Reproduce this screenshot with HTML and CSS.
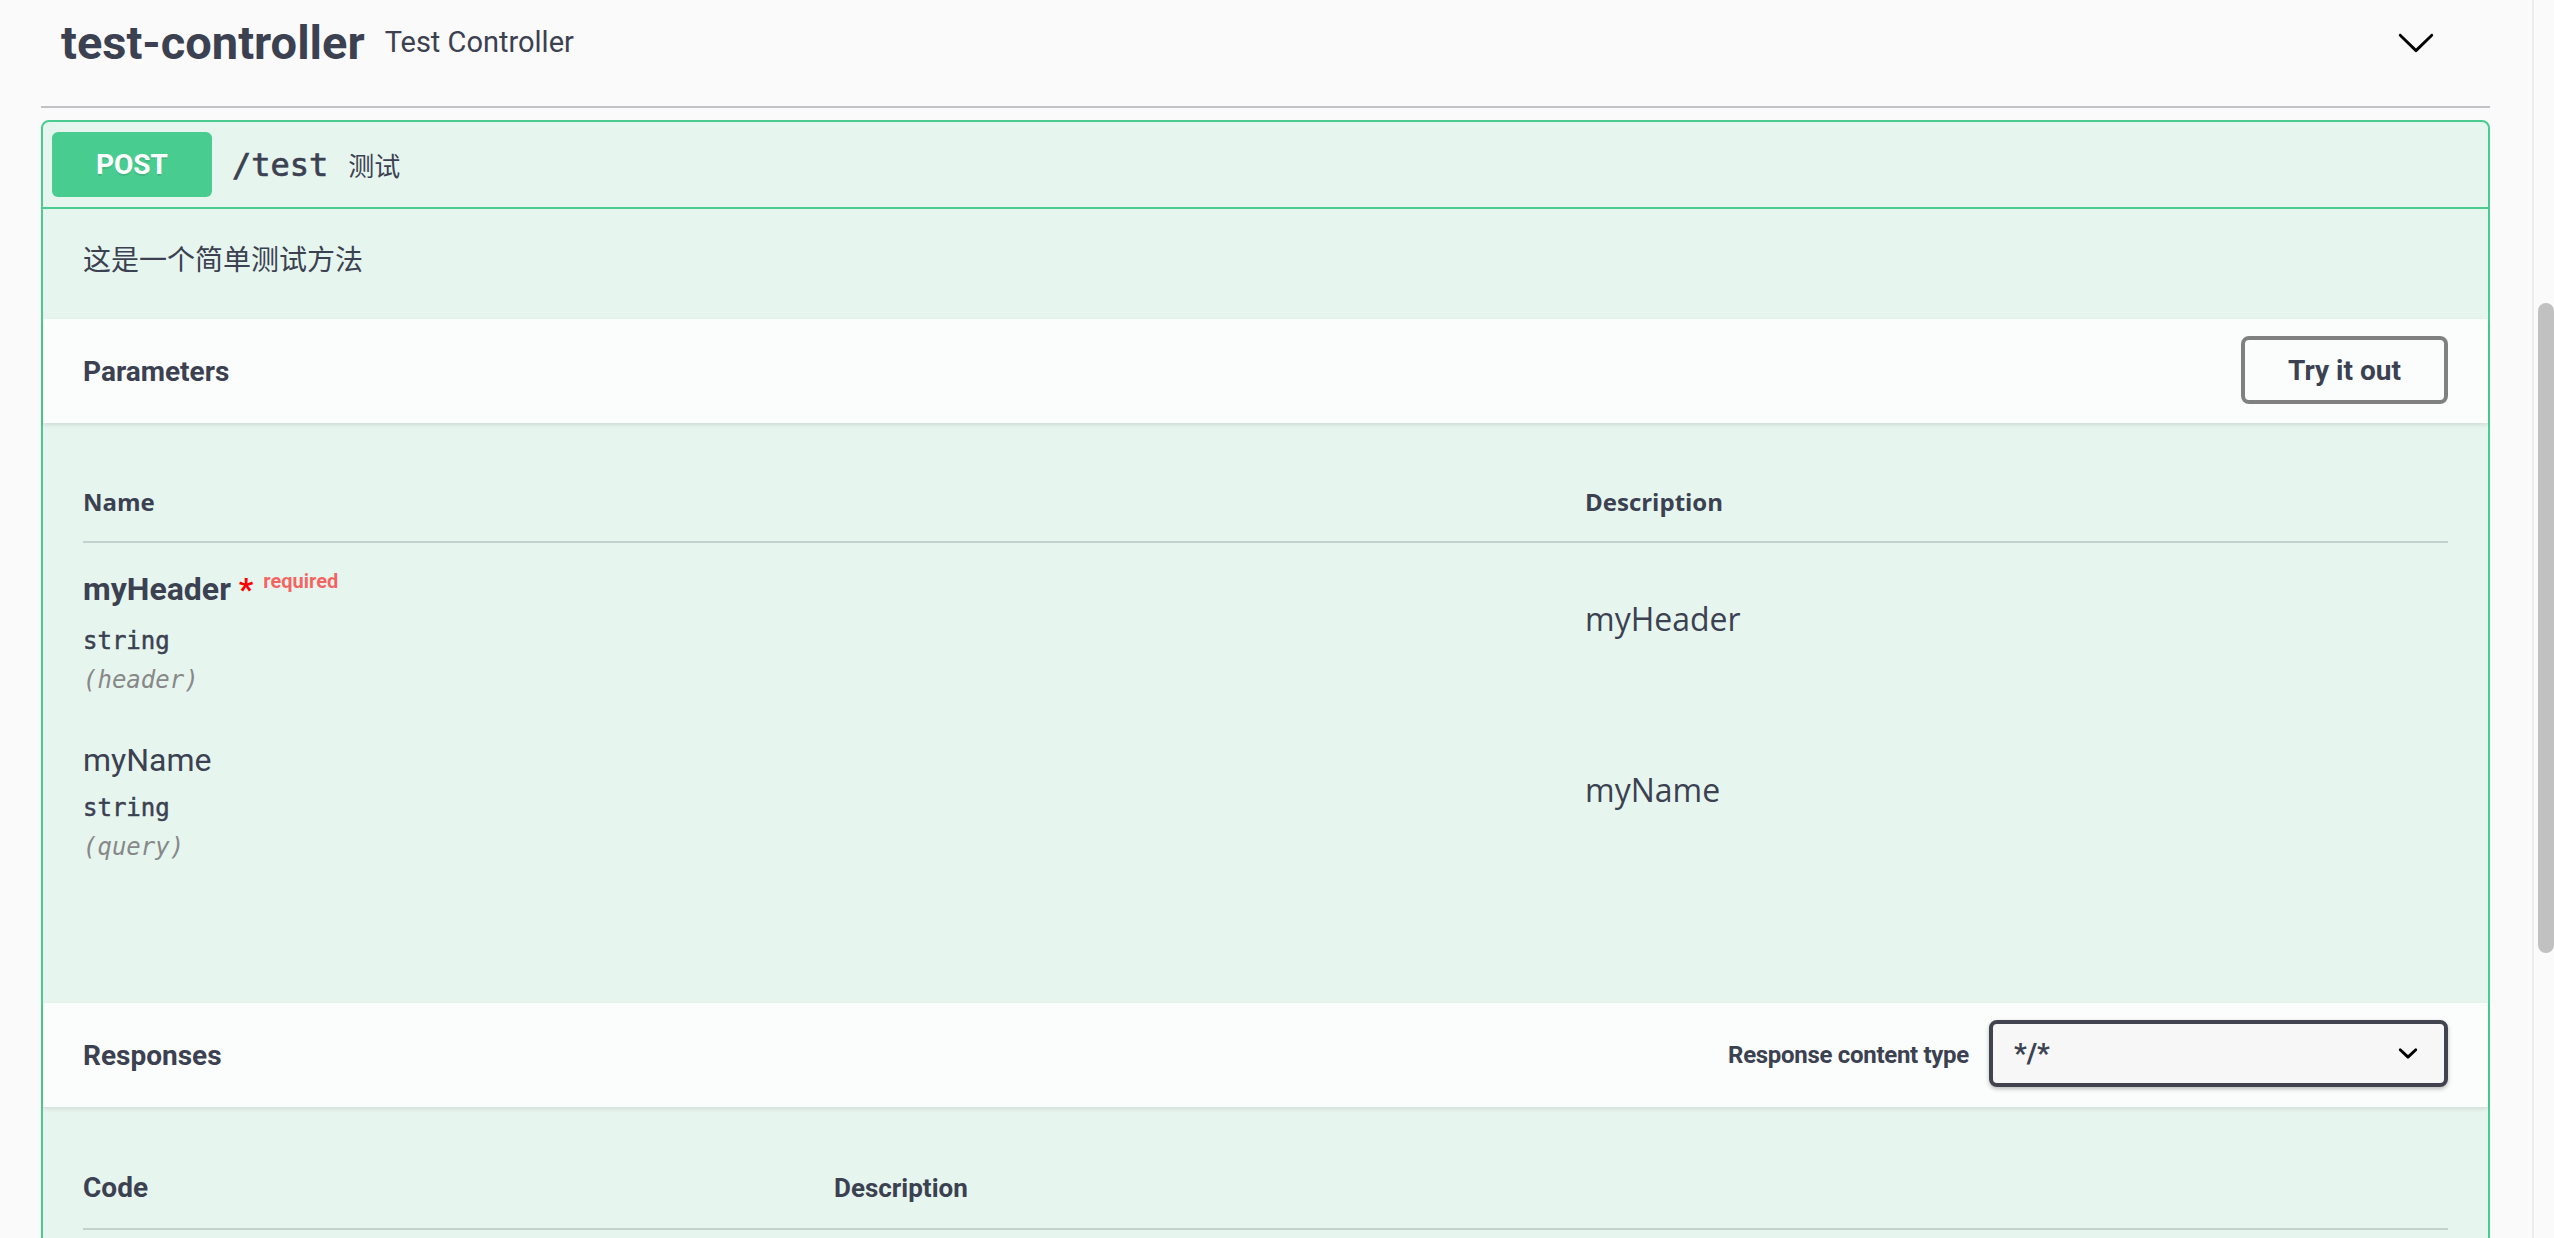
FILE: index.html
```html
<!DOCTYPE html>
<html lang="zh-CN">
<head>
<meta charset="utf-8">
<title>Swagger UI</title>
<link rel="stylesheet" href="styles.css">
</head>
<body>
<div class="viewport">
  <div class="wrapper">
    <div class="tag">
      <h3 class="tag-title">test-controller</h3>
      <span class="tag-desc">Test Controller</span>
      <svg class="tag-arrow" viewBox="0 0 20 20" width="40" height="40"><path d="M17.418 6.109c.272-.268.709-.268.979 0s.271.701 0 .969l-7.908 7.83c-.27.268-.707.268-.979 0l-7.908-7.83c-.27-.268-.27-.701 0-.969.271-.268.709-.268.979 0L10 13.250l7.418-7.141z"/></svg>
    </div>

    <div class="opblock">
      <div class="summary">
        <span class="method">POST</span>
        <span class="path">/test</span>
        <span class="summary-desc">测试</span>
      </div>

      <div class="op-desc">这是一个简单测试方法</div>

      <div class="section-header">
        <h4 class="section-title">Parameters</h4>
        <button class="try">Try it out</button>
      </div>

      <div class="params">
        <div class="ptable">
          <div class="phead">
            <div class="th">Name</div>
            <div class="th">Description</div>
          </div>
          <div class="prow">
            <div class="pname-cell">
              <div class="pname required">myHeader<span class="star">&nbsp;*</span><span class="req-label">required</span></div>
              <div class="ptype">string</div>
              <div class="pin">(header)</div>
            </div>
            <div class="pdesc">myHeader</div>
          </div>
          <div class="prow">
            <div class="pname-cell">
              <div class="pname">myName</div>
              <div class="ptype">string</div>
              <div class="pin">(query)</div>
            </div>
            <div class="pdesc">myName</div>
          </div>
        </div>
      </div>

      <div class="section-header">
        <h4 class="section-title">Responses</h4>
        <div class="ctype">
          <span class="ctype-label">Response content type</span>
          <div class="select">
            <span class="select-value">*/*</span>
            <svg class="select-arrow" viewBox="0 0 20 20" width="40" height="40"><path d="M13.418 7.859a.695.695 0 01.978 0 .68.68 0 010 .969l-3.908 3.83a.697.697 0 01-.979 0l-3.908-3.830a.68.68 0 010-.969.695.695 0 01.978 0L10 11l3.418-3.141z"/></svg>
          </div>
        </div>
      </div>

      <div class="responses">
        <div class="rhead">
          <div class="rcode">Code</div>
          <div class="rdesc">Description</div>
        </div>
      </div>
    </div>
  </div>
</div>
<div class="scrollbar"><div class="thumb"></div></div>
</body>
</html>
```

FILE: styles.css
```css
html, body {
  margin: 0;
  padding: 0;
}
body {
  height: 1238px;
  overflow: hidden;
  display: flex;
  background: #fafafa;
  color: #3b4151;
  font-family: Roboto, "Noto Sans CJK SC", sans-serif;
}
.viewport {
  flex: 1;
  min-width: 0;
}
.wrapper {
  padding: 0 42px 0 41px;
}

/* tag header */
.tag {
  display: flex;
  align-items: center;
  height: 84px;
  padding-bottom: 22px;
  border-bottom: 2px solid rgba(59, 65, 81, 0.3);
}
.tag-title {
  margin: 0;
  padding-left: 20px;
  font-family: Roboto, sans-serif;
  font-weight: 700;
  font-size: 47px;
  color: #3b4151;
}
.tag-desc {
  flex: 1;
  padding: 0 20px;
  font-family: Roboto, sans-serif;
  font-size: 29px;
  color: #3b4151;
}
.tag-arrow {
  margin-right: 54px;
  fill: #000;
}

/* operation block */
.opblock {
  margin-top: 12px;
  border: 2px solid #49cc90;
  border-radius: 8px;
  background: rgba(73, 204, 144, 0.1);
}
.summary {
  display: flex;
  align-items: center;
  padding: 10px 9px;
  border-bottom: 2px solid #49cc90;
}
.method {
  width: 160px;
  height: 65px;
  display: flex;
  align-items: center;
  justify-content: center;
  background: #49cc90;
  color: #fff;
  border-radius: 6px;
  font-family: Roboto, sans-serif;
  font-weight: 700;
  font-size: 28px;
  text-shadow: 0 2px 0 rgba(0, 0, 0, 0.1);
}
.path {
  padding: 0 20px;
  font-family: "DejaVu Sans Mono", "Liberation Mono", monospace;
  font-weight: 400;
  -webkit-text-stroke: 0.7px #3b4151;
  font-size: 32px;
  color: #3b4151;
}
.summary-desc {
  font-family: "Noto Sans CJK SC", sans-serif;
  font-size: 26px;
  color: #3b4151;
}
.op-desc {
  padding: 30px 40px 40px;
  font-family: "Open Sans", "Noto Sans CJK SC", sans-serif;
  font-size: 28px;
  line-height: 40px;
  color: #3b4151;
}

.section-header {
  box-sizing: border-box;
  height: 104px;
  padding: 0 40px;
  display: flex;
  align-items: center;
  justify-content: space-between;
  background: rgba(255, 255, 255, 0.8);
  box-shadow: 0 2px 4px rgba(0, 0, 0, 0.1);
}
.section-title {
  margin: 0;
  font-family: Roboto, sans-serif;
  font-weight: 700;
  font-size: 28px;
  color: #3b4151;
}
.try {
  box-sizing: border-box;
  width: 207px;
  height: 68px;
  margin-top: -2px;
  border: 4px solid #808080;
  border-radius: 8px;
  background: transparent;
  font-family: Roboto, sans-serif;
  font-weight: 700;
  font-size: 28px;
  color: #3b4151;
}

/* parameters table */
.params {
  padding: 40px 40px 122px;
}
.phead {
  display: grid;
  grid-template-columns: 1502px 1fr;
  border-bottom: 2px solid rgba(59, 65, 81, 0.2);
}
.th {
  padding: 24px 0;
  font-family: "Open Sans", sans-serif;
  font-weight: 700;
  font-size: 24px;
  line-height: 30px;
  color: #3b4151;
}
.prow {
  display: grid;
  grid-template-columns: 1502px 1fr;
}
.pname-cell {
  padding: 22px 0 18px;
}
.pname {
  font-family: Roboto, sans-serif;
  font-size: 32px;
  line-height: 48px;
  color: #3b4151;
}
.pname.required {
  font-weight: 700;
}
.star {
  color: #f00;
}
.req-label {
  position: relative;
  top: -12px;
  padding-left: 10px;
  font-size: 20px;
  color: rgba(255, 0, 0, 0.6);
}
.ptype {
  padding: 10px 0 9px;
  font-family: "DejaVu Sans Mono", monospace;
  font-weight: 400;
  -webkit-text-stroke: 0.5px #3b4151;
  font-size: 24px;
  line-height: 28px;
  color: #3b4151;
}
.pin {
  font-family: "DejaVu Sans Mono", monospace;
  font-style: italic;
  font-size: 24px;
  line-height: 32px;
  color: #888;
}
.pdesc {
  padding-top: 54px;
  font-family: "Open Sans", sans-serif;
  font-size: 32px;
  line-height: 44px;
  color: #3b4151;
}

/* responses */
.ctype {
  display: flex;
  align-items: center;
}
.ctype-label {
  margin-right: 20px;
  font-family: Roboto, sans-serif;
  font-weight: 700;
  font-size: 24px;
  letter-spacing: -0.3px;
  color: #3b4151;
}
.select {
  box-sizing: border-box;
  width: 459px;
  height: 67px;
  margin-top: -4px;
  padding: 0 20px 0 21px;
  display: flex;
  align-items: center;
  justify-content: space-between;
  border: 4px solid #41444e;
  border-radius: 8px;
  background: #f7f7f7;
  box-shadow: 0 2px 4px rgba(0, 0, 0, 0.25);
}
.select-value {
  font-family: Roboto, sans-serif;
  font-weight: 700;
  font-size: 28px;
  color: #3b4151;
}
.select-arrow {
  margin-right: -4px;
  fill: #000;
}
.responses {
  padding: 40px 40px 300px;
}
.rhead {
  display: grid;
  grid-template-columns: 751px 1fr;
  align-items: center;
  border-bottom: 2px solid rgba(59, 65, 81, 0.2);
  padding: 23px 0 22px;
}
.rcode {
  font-family: Roboto, sans-serif;
  font-weight: 700;
  font-size: 28px;
  line-height: 36px;
}
.rdesc {
  font-family: Roboto, sans-serif;
  font-weight: 700;
  font-size: 26px;
  line-height: 36px;
}

/* fake scrollbar */
.scrollbar {
  width: 20px;
  flex: none;
  border-left: 2px solid #ececec;
  background: #fafafa;
}
.thumb {
  margin: 303px 0 0 4px;
  width: 16px;
  height: 650px;
  border-radius: 8px;
  background: #c1c1c1;
}
```
